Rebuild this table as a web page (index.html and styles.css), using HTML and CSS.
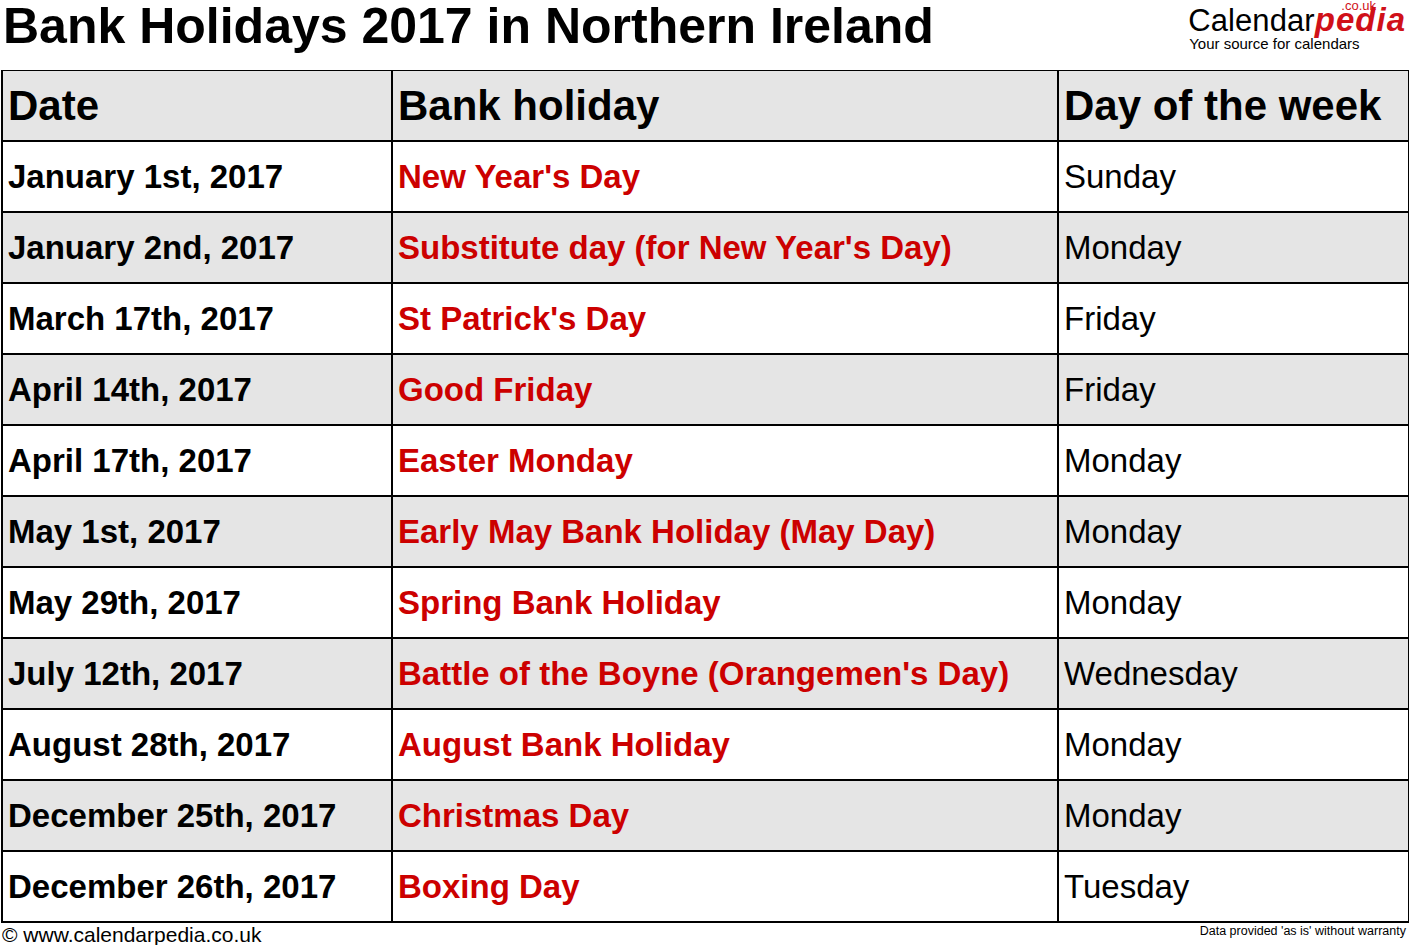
FILE: index.html
```html
<!DOCTYPE html>
<html>
<head>
<meta charset="utf-8">
<link rel="stylesheet" href="styles.css">
</head>
<body>
<div class="page">
  <header class="top">
    <h1 class="title">Bank Holidays 2017 in Northern Ireland</h1>
    <div class="logo">
      <span class="logo-couk">.co.uk</span>
      <div class="logo-main"><span class="logo-cal">Calendar</span><span class="logo-pedia">pedia</span></div>
      <div class="logo-sub">Your source for calendars</div>
    </div>
  </header>
  <table class="hol">
    <colgroup><col class="c1"><col class="c2"><col class="c3"></colgroup>
    <thead>
      <tr><th>Date</th><th>Bank holiday</th><th>Day of the week</th></tr>
    </thead>
    <tbody>
      <tr><td class="d">January 1st, 2017</td><td class="h">New Year's Day</td><td class="w">Sunday</td></tr>
      <tr class="alt"><td class="d">January 2nd, 2017</td><td class="h">Substitute day (for New Year's Day)</td><td class="w">Monday</td></tr>
      <tr><td class="d">March 17th, 2017</td><td class="h">St Patrick's Day</td><td class="w">Friday</td></tr>
      <tr class="alt"><td class="d">April 14th, 2017</td><td class="h">Good Friday</td><td class="w">Friday</td></tr>
      <tr><td class="d">April 17th, 2017</td><td class="h">Easter Monday</td><td class="w">Monday</td></tr>
      <tr class="alt"><td class="d">May 1st, 2017</td><td class="h">Early May Bank Holiday (May Day)</td><td class="w">Monday</td></tr>
      <tr><td class="d">May 29th, 2017</td><td class="h">Spring Bank Holiday</td><td class="w">Monday</td></tr>
      <tr class="alt"><td class="d">July 12th, 2017</td><td class="h">Battle of the Boyne (Orangemen's Day)</td><td class="w">Wednesday</td></tr>
      <tr><td class="d">August 28th, 2017</td><td class="h">August Bank Holiday</td><td class="w">Monday</td></tr>
      <tr class="alt"><td class="d">December 25th, 2017</td><td class="h">Christmas Day</td><td class="w">Monday</td></tr>
      <tr><td class="d">December 26th, 2017</td><td class="h">Boxing Day</td><td class="w">Tuesday</td></tr>
    </tbody>
  </table>
  <footer class="foot">
    <span class="copy">© www.calendarpedia.co.uk</span>
    <span class="warr">Data provided 'as is' without warranty</span>
  </footer>
</div>
</body>
</html>
```
FILE: styles.css
```css
html, body {
  margin: 0;
  padding: 0;
  background: #ffffff;
}
body {
  font-family: "Liberation Sans", Arial, sans-serif;
  color: #000;
}
.page {
  width: 1409px;
}
.top {
  display: flex;
  justify-content: space-between;
  align-items: flex-start;
  height: 70px;
}
.title {
  margin: 0;
  padding: 0 0 0 3px;
  font-size: 50px;
  font-weight: bold;
  line-height: 53px;
  white-space: nowrap;
}
.logo {
  position: relative;
  padding: 5px 3px 0 0;
}
.logo-main {
  font-size: 31px;
  line-height: 30px;
  white-space: nowrap;
}
.logo-cal {
  color: #000;
  letter-spacing: 0.1px;
}
.logo-pedia {
  color: #d01018;
  font-weight: bold;
  font-style: italic;
  font-size: 33px;
  letter-spacing: 1px;
}
.logo-couk {
  position: absolute;
  right: 33px;
  top: 0;
  color: #d01018;
  font-size: 13px;
  line-height: 11px;
}
.logo-sub {
  font-size: 15px;
  line-height: 16px;
  padding-left: 1px;
}
.hol {
  border-collapse: collapse;
  margin-left: 1px;
  width: 1407px;
  table-layout: fixed;
}
.c1 { width: 390px; }
.c2 { width: 666px; }
.c3 { width: 351px; }
.hol th, .hol td {
  border: 2px solid #000;
  height: 69px;
  padding: 0 0 0 5px;
  text-align: left;
  vertical-align: middle;
  white-space: nowrap;
}
.hol thead tr {
  background: #e5e5e5;
}
.hol tr:first-child th {
  border-top-width: 1px;
}
.hol th {
  font-size: 42px;
  font-weight: bold;
}
.hol td {
  font-size: 33px;
}
.hol tr.alt {
  background: #e5e5e5;
}
.hol td.d {
  font-weight: bold;
}
.hol td.h {
  font-weight: bold;
  color: #cc0000;
}
.hol td.w {
  font-weight: normal;
}
.foot {
  display: flex;
  justify-content: space-between;
  align-items: flex-start;
  padding: 0 3px 0 2px;
}
.copy {
  font-size: 21px;
  line-height: 23px;
}
.warr {
  font-size: 12.5px;
  line-height: 16px;
}
```
